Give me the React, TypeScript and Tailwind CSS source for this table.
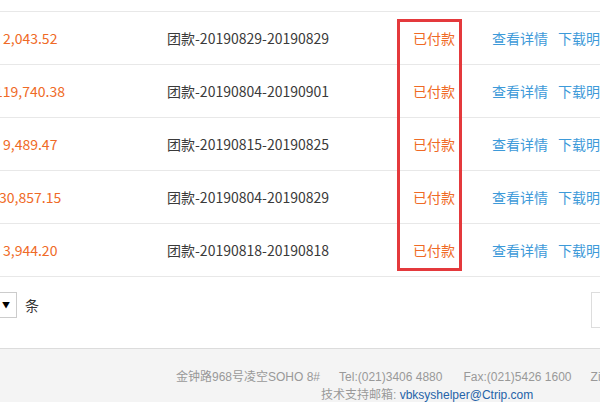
import React from "react";

const rows = [
  { amt: "2,043.52", amtCls: "w-[171px] shrink-0 text-[#ef6a26] pl-[3px]", desc: "团款-20190829-20190829" },
  { amt: "119,740.38", amtCls: "w-[171px] shrink-0 text-[#ef6a26] ml-[-5px] pr-[-5px]", desc: "团款-20190804-20190901" },
  { amt: "9,489.47", amtCls: "w-[171px] shrink-0 text-[#ef6a26] pl-[3px]", desc: "团款-20190815-20190825" },
  { amt: "30,857.15", amtCls: "w-[171px] shrink-0 text-[#ef6a26] ml-[-1px]", desc: "团款-20190804-20190829" },
  { amt: "3,944.20", amtCls: "w-[171px] shrink-0 text-[#ef6a26] pl-[3px]", desc: "团款-20190818-20190818" },
];

export default function App() {
  return (
    <div
      className="relative w-[600px] h-[402px] overflow-hidden bg-white"
      style={{ fontFamily: '"Noto Sans CJK SC", "Noto Sans", sans-serif' }}
    >
      <div className="h-[12px] border-b border-[#e8e8e8]" />
      {rows.map((r, i) => (
        <div
          key={i}
          className="h-[53px] border-b border-[#e8e8e8] flex items-center text-[14px] w-[700px]"
        >
          <div className="w-[167px] shrink-0 flex">
            <div className={r.amtCls}>{r.amt}</div>
          </div>
          <div className="w-[246px] shrink-0 text-[#3a3a3a]">{r.desc}</div>
          <div className="w-[79px] shrink-0 text-[#ef6a26]">已付款</div>
          <div className="flex gap-[10px] text-[#3d9ad9] whitespace-nowrap">
            <span>查看详情</span>
            <span>下载明细</span>
          </div>
        </div>
      ))}
      <div className="absolute left-[397px] top-[19px] w-[65px] h-[252px] border-[3px] border-[#e4393c]" />
      <div className="h-[71px] flex items-start pt-[15px] w-[680px] ml-[-40px]">
        <div className="w-[57px] h-[26px] border border-[#ccc] flex items-center justify-end pr-[6px] text-[8px] text-black">
          ▼
        </div>
        <div className="ml-[8px] h-[26px] flex items-center text-[14px] text-[#333]">条</div>
        <div className="ml-auto w-[49px] h-[36px] border border-[#ddd]" />
      </div>
      <div
        className="border-t border-[#dcdcdc] bg-[#f4f4f4] h-[60px] pt-[19px] text-[12px] text-[#999] leading-[18px]"
        style={{ fontFamily: '"Liberation Sans", "Noto Sans CJK SC", sans-serif' }}
      >
        <div className="flex whitespace-nowrap pl-[176px]">
          <span>金钟路968号凌空SOHO 8#</span>
          <span className="ml-[19px]">Tel:(021)3406 4880</span>
          <span className="ml-[21px]">Fax:(021)5426 1600</span>
          <span className="ml-[19px]">Zip:201103</span>
        </div>
        <div className="whitespace-nowrap pl-[321px]">
          技术支持邮箱: <span className="text-[#2563a8]">vbksyshelper@Ctrip.com</span>
        </div>
      </div>
    </div>
  );
}
